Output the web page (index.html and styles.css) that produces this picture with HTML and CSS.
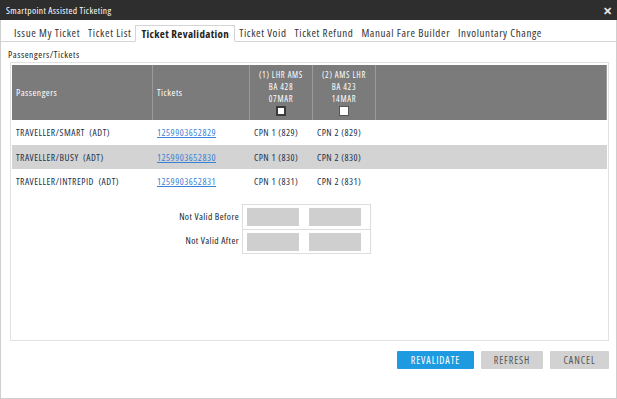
FILE: index.html
```html
<!DOCTYPE html>
<html>
<head>
<meta charset="utf-8">
<link rel="stylesheet" href="styles.css">
</head>
<body>
<div class="window">
  <div class="titlebar">
    <span class="title">Smartpoint Assisted Ticketing</span>
    <span class="close">✕</span>
  </div>
  <div class="tabs">
    <span class="tab">Issue My Ticket</span>
    <span class="tab">Ticket List</span>
    <span class="tab active">Ticket Revalidation</span>
    <span class="tab">Ticket Void</span>
    <span class="tab">Ticket Refund</span>
    <span class="tab">Manual Fare Builder</span>
    <span class="tab">Involuntary Change</span>
  </div>
  <div class="content">
    <div class="section-label">Passengers/Tickets</div>
    <div class="panel">
      <div class="grid">
        <div class="th th-left">Passengers</div>
        <div class="th th-left">Tickets</div>
        <div class="th th-seg"><span>(1) LHR AMS</span><span>BA 428</span><span>07MAR</span><span class="cb focus"></span></div>
        <div class="th th-seg"><span>(2) AMS LHR</span><span>BA 423</span><span>14MAR</span><span class="cb"></span></div>
        <div class="th"></div>

        <div class="td">TRAVELLER/SMART&nbsp; (ADT)</div>
        <div class="td"><a class="link" href="#">1259903652829</a></div>
        <div class="td">CPN 1 (829)</div>
        <div class="td">CPN 2 (829)</div>
        <div class="td"></div>

        <div class="td alt">TRAVELLER/BUSY&nbsp; (ADT)</div>
        <div class="td alt"><a class="link" href="#">1259903652830</a></div>
        <div class="td alt">CPN 1 (830)</div>
        <div class="td alt">CPN 2 (830)</div>
        <div class="td alt"></div>

        <div class="td">TRAVELLER/INTREPID&nbsp; (ADT)</div>
        <div class="td"><a class="link" href="#">1259903652831</a></div>
        <div class="td">CPN 1 (831)</div>
        <div class="td">CPN 2 (831)</div>
        <div class="td"></div>
      </div>
      <div class="validity">
        <div class="vlabels">
          <div class="vlabel">Not Valid Before</div>
          <div class="vlabel">Not Valid After</div>
        </div>
        <div class="vbox">
          <div class="vrow"><span class="vinput"></span><span class="vinput"></span></div>
          <div class="vrow"><span class="vinput"></span><span class="vinput"></span></div>
        </div>
      </div>
    </div>
    <div class="actions">
      <button class="btn primary">REVALIDATE</button>
      <button class="btn">REFRESH</button>
      <button class="btn">CANCEL</button>
    </div>
  </div>
</div>
</body>
</html>
```
FILE: styles.css
```css
* { box-sizing: border-box; }
html, body { margin: 0; padding: 0; }
body {
  width: 617px;
  height: 399px;
  font-family: "Open Sans", "Noto Sans", sans-serif;
  font-stretch: 85%;
  font-size: 11px;
  color: #222;
  background: #fff;
}
.window {
  width: 617px;
  height: 399px;
  border: 1px solid #cfcfcf;
  border-top: none;
  display: flex;
  flex-direction: column;
}
.titlebar {
  height: 20px;
  background: #2e2e2e;
  color: #fff;
  display: flex;
  align-items: center;
  justify-content: space-between;
  padding: 0 5px 0 6px;
  font-size: 9.5px;
  letter-spacing: 0.35px;
  margin: 0 -1px;
}
.close { font-size: 11px; font-weight: bold; color: #e8e8e8; letter-spacing: 0; }
.tabs {
  display: flex;
  align-items: flex-end;
  margin-top: 5px;
  padding-left: 9px;
  border-bottom: 1px solid #d4d4d4;
  height: 17px;
}
.tab {
  padding: 0 4px;
  height: 16px;
  line-height: 15px;
  font-size: 11px;
  letter-spacing: 0.6px;
  color: #333;
  white-space: nowrap;
}
.tab.active {
  font-weight: bold;
  letter-spacing: 0.35px;
  border: 1px solid #d4d4d4;
  border-bottom: 1px solid #fff;
  height: 17px;
  margin-bottom: -1px;
  padding: 0 5px;
  color: #222;
}
.content {
  flex: 1;
  display: flex;
  flex-direction: column;
  padding: 6px 7px 0 9px;
}
.section-label {
  font-size: 9.5px;
  letter-spacing: 0.55px;
  color: #222;
  height: 14px;
  line-height: 14px;
  margin-left: -2px;
}
.panel {
  height: 279px;
  border: 1px solid #e2e2e2;
  padding: 2px 1px 0 1px;
  display: flex;
  flex-direction: column;
}
.grid {
  display: grid;
  grid-template-columns: 141px 97px 63px 63px 1fr;
  grid-template-rows: 55px 25px 24px 25px;
}
.th {
  background: #7b7b7b;
  color: #fff;
  border-right: 1px solid #9a9a9a;
  font-size: 9.5px;
  letter-spacing: 0.5px;
  display: flex;
  align-items: center;
}
.th:last-child { border-right: none; }
.th-left { padding-left: 4px; }
.th-seg {
  flex-direction: column;
  justify-content: flex-end;
  padding-bottom: 4px;
  font-size: 8.5px;
  letter-spacing: 0.7px;
  line-height: 12px;
}
.th-seg span { display: block; height: 12px; }
.cb {
  width: 10px;
  height: 10px !important;
  background: #fff;
  border: 1px solid #555;
  margin-top: 1px;
}
.cb.focus { border: 2px solid #3a3a3a; }
.td {
  display: flex;
  align-items: center;
  padding-left: 4px;
  font-size: 9.5px;
  letter-spacing: 0.5px;
  color: #223049;
  white-space: nowrap;
}
.td.alt { background: #d3d3d3; }
.link { color: #3a82d6; text-decoration: underline; }
.validity {
  display: flex;
  margin-top: 10px;
  margin-left: 148px;
}
.vlabels {
  display: flex;
  flex-direction: column;
  width: 82px;
  padding-top: 1px;
}
.vlabel {
  height: 24px;
  line-height: 24px;
  font-size: 9.5px;
  letter-spacing: 0.4px;
  color: #222;
  text-align: right;
  padding-right: 3px;
}
.vbox {
  border: 1px solid #ddd;
  width: 129px;
}
.vrow {
  height: 24px;
  display: flex;
  align-items: center;
  gap: 10px;
  padding-left: 4px;
}
.vrow + .vrow { border-top: 1px solid #ddd; }
.vinput {
  width: 52px;
  height: 18px;
  background: #cfcfcf;
}
.actions {
  display: flex;
  justify-content: flex-end;
  gap: 7px;
  margin-top: 10px;
}
.btn {
  height: 18px;
  border: none;
  border-radius: 1px;
  background: #d2d2d2;
  color: #555;
  font-family: "Open Sans", "Noto Sans", sans-serif;
  font-stretch: 85%;
  font-size: 10px;
  letter-spacing: 0.9px;
  padding: 0;
}
.btn.primary { background: #1e9be0; color: #fff; width: 77px; }
.btn:nth-child(2) { width: 62px; }
.btn:nth-child(3) { width: 59px; }
```
